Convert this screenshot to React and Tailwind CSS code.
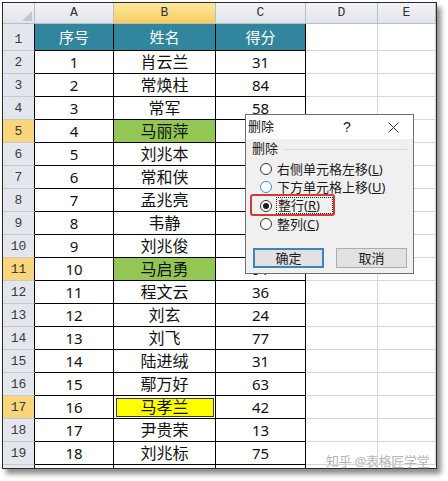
const font = { fontFamily: '"Noto Sans", "Noto Sans CJK SC", sans-serif' };

const colWidths = ['w-[79px]', 'w-[102px]', 'w-[90px]', 'w-[72px]', 'w-[58px]'];
const letters = ['A', 'B', 'C', 'D', 'E'];

// scores under the dialog are not visible, left blank
const rows = [
  [1, '肖云兰', 31],
  [2, '常焕柱', 84],
  [3, '常军', 58],
  [4, '马丽萍', ''],
  [5, '刘兆本', ''],
  [6, '常和侠', ''],
  [7, '孟兆亮', ''],
  [8, '韦静', ''],
  [9, '刘兆俊', ''],
  [10, '马启勇', 91],
  [11, '程文云', 36],
  [12, '刘玄', 24],
  [13, '刘飞', 77],
  [14, '陆进绒', 31],
  [15, '鄢万好', 63],
  [16, '马孝兰', 42],
  [17, '尹贵荣', 13],
  [18, '刘兆标', 75],
];

const hlRows = [5, 11, 17];

const RowHead = ({ n, h }) => (
  <div
    className={`w-[32px] ${h} shrink-0 flex items-end justify-center pb-[1px] border-r border-r-black border-b border-b-[#c6cad1] text-[13px] text-[#3a3a3a] ${
      hlRows.includes(n) ? 'bg-[#f9d67c]' : 'bg-[#e3e7ed]'
    }`}
    style={{ fontFamily: '"Liberation Mono", monospace' }}
  >
    {n}
  </div>
);

const Blank = ({ i, h }) => (
  <div className={`${colWidths[i]} ${h} shrink-0 bg-white border-r border-b border-[#d6d6d6]`} />
);

const Radio = ({ checked, hover }) => (
  <span
    className={`w-[12px] h-[12px] shrink-0 rounded-full border bg-white flex items-center justify-center ${
      hover ? 'border-[#3d8fd4]' : 'border-[#333]'
    }`}
  >
    {checked && <span className="w-[6px] h-[6px] rounded-full bg-[#1b1b1b]" />}
  </span>
);

const Option = ({ text, k, h, checked, hover, focus }) => (
  <div className={`flex items-center ${h} pl-[14px]`}>
    <Radio checked={checked} hover={hover} />
    <span
      className={`ml-[4px] leading-[15px] ${
        focus ? 'border border-dotted border-[#222] pr-[12px] pl-[1px]' : 'pl-[1px]'
      }`}
    >
      {text}(<u>{k}</u>)
    </span>
  </div>
);

const Dialog = () => (
  <div
    className="absolute left-[242px] top-[111px] w-[169px] h-[160px] border border-[#6f6f6f] bg-[#f0f0f0] text-[13px] text-[#1a1a1a]"
    style={font}
  >
    <div className="h-[24px] bg-white flex items-center">
      <span className="w-[88px] pl-[2px]">删除</span>
      <span className="w-[26px] text-center text-[14px]" style={{ fontFamily: '"Liberation Sans", sans-serif' }}>
        ?
      </span>
      <span className="w-[18px]" />
      <span className="w-[30px] flex justify-center">
        <svg width="11" height="11" viewBox="0 0 11 11">
          <path d="M0.5 0.5 L10.5 10.5 M10.5 0.5 L0.5 10.5" stroke="#333" strokeWidth="1" />
        </svg>
      </span>
    </div>
    <div className="h-[20px] flex items-center pl-[6px]">
      <span>删除</span>
      <span className="flex-1 ml-[5px] mr-[6px] h-px bg-[#d9d9d9]" />
    </div>
    <div className="mt-[1px]">
      <Option text="右侧单元格左移" k="L" h="h-[18px]" />
      <Option text="下方单元格上移" k="U" h="h-[18px]" hover />
      <Option text="整行" k="R" h="h-[19px]" checked focus />
      <Option text="整列" k="C" h="h-[18px]" />
    </div>
    <div className="mt-[15px] flex pl-[7px] gap-[12px]">
      <button className="w-[71px] h-[20px] border-2 border-[#3a86bc] bg-[#e1e1e1] flex items-center justify-center leading-none">
        确定
      </button>
      <button className="w-[71px] h-[20px] border border-[#adadad] bg-[#e1e1e1] flex items-center justify-center leading-none">
        取消
      </button>
    </div>
    <div className="absolute left-[4px] top-[79px] w-[85px] h-[22px] border-2 border-[#d33a31] rounded-[3px]" />
  </div>
);

export default function App() {
  return (
    <div className="w-[448px] h-[481px] bg-white overflow-hidden">
      <div className="relative ml-[2px] mt-[2px] w-[435px] border border-[#2a2a2a] shadow-[4px_5px_5px_rgba(0,0,0,0.45)] bg-white">
        {/* column letters */}
        <div className="flex h-[21px]">
          <div className="w-[32px] shrink-0 relative bg-gradient-to-b from-[#f2f3f5] to-[#e1e5ea] border-r border-b border-[#b9bec6]">
            <svg className="absolute right-[2px] bottom-[2px]" width="10" height="10" viewBox="0 0 10 10">
              <polygon points="10,0 10,10 0,10" fill="#c3c7cd" />
            </svg>
          </div>
          {letters.map((l, i) => (
            <div
              key={l}
              className={`${colWidths[i]} shrink-0 flex items-end justify-center pb-[1px] border-r border-b border-[#b9bec6] text-[13px] text-[#333] ${
                l === 'B'
                  ? 'bg-gradient-to-b from-[#fde7a0] to-[#f7cd5c]'
                  : 'bg-gradient-to-b from-[#f2f3f5] to-[#e1e5ea]'
              }`}
              style={{ fontFamily: '"Liberation Mono", monospace' }}
            >
              {l}
            </div>
          ))}
        </div>

        {/* header row */}
        <div className="flex h-[27px]" style={font}>
          <RowHead n={1} h="h-[27px]" />
          {['序号', '姓名', '得分'].map((t, i) => (
            <div
              key={t}
              className={`${colWidths[i]} shrink-0 flex items-center justify-center bg-[#31859c] text-white text-[15px] border-r border-b border-black`}
            >
              {t}
            </div>
          ))}
          <Blank i={3} h="h-[27px]" />
          <Blank i={4} h="h-[27px]" />
        </div>

        {/* data rows */}
        {rows.map(([no, name, score], idx) => {
          const n = idx + 2;
          const green = n === 5 || n === 11;
          const yellow = n === 17;
          return (
            <div key={n} className="flex h-[23px]" style={font}>
              <RowHead n={n} h="h-[23px]" />
              <div className="w-[79px] shrink-0 flex items-center justify-center text-[15px] text-[#111] border-r border-b border-black">
                {no}
              </div>
              <div
                className={`w-[102px] shrink-0 flex items-center justify-center text-[16px] text-[#111] border-r border-b border-black ${
                  green ? 'bg-[#93c753]' : 'bg-white'
                }`}
              >
                {yellow ? (
                  <div className="w-[98px] h-[19px] border border-[#3d3d2a] bg-[#ffff00] flex items-center justify-center">
                    {name}
                  </div>
                ) : (
                  name
                )}
              </div>
              <div className="w-[90px] shrink-0 flex items-center justify-center text-[15px] text-[#111] border-r border-b border-black">
                {score}
              </div>
              <Blank i={3} h="h-[23px]" />
              <Blank i={4} h="h-[23px]" />
            </div>
          );
        })}

        {/* partial row 20 */}
        <div className="flex h-[3px]">
          <div className="w-[32px] shrink-0 bg-[#e3e7ed] border-r border-r-black" />
          <div className="w-[79px] shrink-0 border-r border-black" />
          <div className="w-[102px] shrink-0 border-r border-black" />
          <div className="w-[90px] shrink-0 border-r border-black" />
          <div className="w-[72px] shrink-0 border-r border-[#d6d6d6]" />
        </div>

        <Dialog />

        <div
          className="absolute left-[323px] top-[450px] whitespace-nowrap text-[13px] leading-[16px] text-[#b4b4b4] tracking-[-0.3px]"
          style={{ ...font, textShadow: '0 0 1px #fff, 0 0 1px #fff' }}
        >
          知乎 @表格匠学堂
        </div>
      </div>
    </div>
  );
}
